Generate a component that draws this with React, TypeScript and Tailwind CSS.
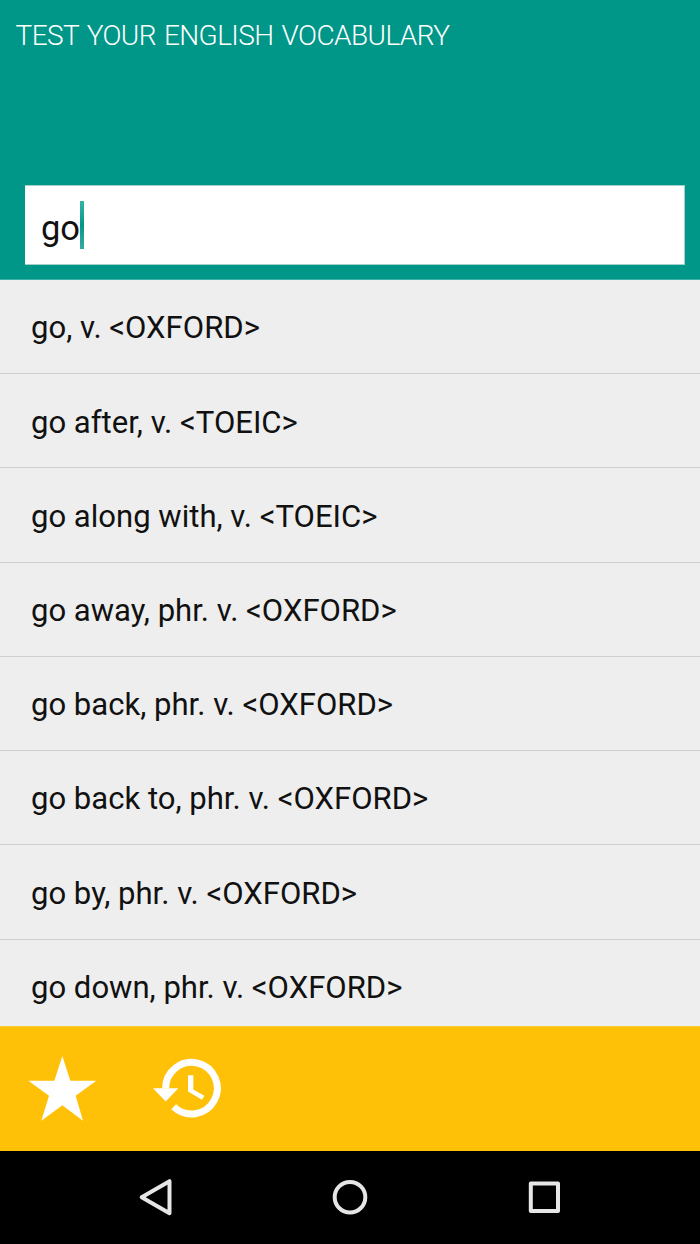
const words = [
  'go, v. <OXFORD>',
  'go after, v. <TOEIC>',
  'go along with, v. <TOEIC>',
  'go away, phr. v. <OXFORD>',
  'go back, phr. v. <OXFORD>',
  'go back to, phr. v. <OXFORD>',
  'go by, phr. v. <OXFORD>',
  'go down, phr. v. <OXFORD>',
];

export default function App() {
  return (
    <div className="flex h-[1244px] w-[700px] flex-col overflow-hidden bg-[#eeeeee] font-['Roboto',sans-serif]">
      <header className="flex h-[280px] shrink-0 flex-col justify-between border-b border-[#40aea4] bg-[#009688] pt-[19px] pb-[14px]">
        <h1 className="pl-[15.5px] text-[28px] leading-[34px] font-light tracking-[-0.58px] [word-spacing:1.8px] whitespace-nowrap text-white">TEST YOUR ENGLISH VOCABULARY</h1>
        <div className="mr-[15px] ml-[25px] flex h-[80px] items-center border-t border-r border-b border-[#a5cfca] bg-white pl-4">
          <span className="pt-[6px] text-[34.5px] leading-[40px] text-[#111111]">go</span>
          <span className="mb-px h-[48px] w-[3.5px] bg-linear-to-b from-[#33b5a8] via-[#009688] via-50% to-[#33aba0]" />
        </div>
      </header>
      <ul className="h-[746px] shrink-0 overflow-hidden">
        {words.map((word) => (
          <li key={word} className="flex h-[94.23px] items-center border-b border-[#cfcfcf] pt-[4px] pl-[31px] text-[31.07px] whitespace-nowrap text-[#111111]">
            {word}
          </li>
        ))}
      </ul>
      <div className="flex h-[125px] shrink-0 items-center gap-[45px] border-t border-[#fccb33] bg-[#ffc107] pb-[1.4px] pl-[23px] text-white">
        <svg className="size-[80px]" viewBox="69 100 240 240" fill="currentColor">
          <path d="M187 124 211 198H289L227 243 249 318 187 272 124 318 147 243 85 198H163z" />
        </svg>
        <svg className="size-[80px]" viewBox="444 98.5 240 240" fill="currentColor">
          <path d="M497 220A77.5 77.5 0 1 1 521 275" fill="none" stroke="currentColor" strokeWidth="21" />
          <path d="M459 219H535L497 259z" />
          <path d="M564 180H580V223L613 242 606 254 564 229z" />
        </svg>
      </div>
      <nav className="flex flex-1 items-center bg-black">
        <svg className="h-[93px] w-[700px]" viewBox="0 1151 700 93" fill="none" stroke="#e6e6e6" strokeWidth="4" strokeLinejoin="round">
          <path d="M169.5 1181.2v32l-27.8-16z" />
          <circle cx="350" cy="1197.2" r="15.3" />
          <rect x="530.8" y="1183.5" width="27.2" height="27.5" />
        </svg>
      </nav>
    </div>
  );
}
